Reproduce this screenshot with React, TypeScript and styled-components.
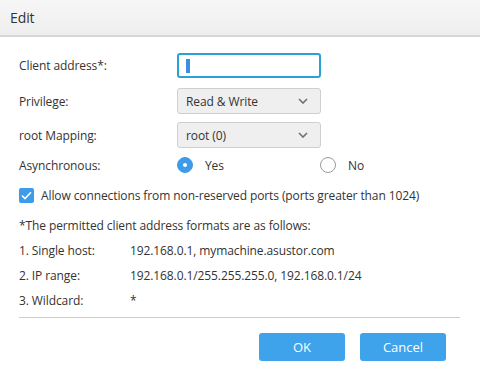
import styled, { createGlobalStyle } from 'styled-components';

const GlobalStyle = createGlobalStyle`
  html, body {
    margin: 0;
    padding: 0;
    background: #ffffff;
  }
  body {
    font-family: 'Open Sans', 'Noto Sans', 'Liberation Sans', sans-serif;
    font-size: 12px;
    letter-spacing: -0.1px;
    color: #333333;
  }
`;

const Dialog = styled.div`
  width: 480px;
  height: 373px;
  display: flex;
  flex-direction: column;
  background: #ffffff;
  overflow: hidden;
`;

const TitleBar = styled.div`
  height: 35px;
  display: flex;
  align-items: center;
  padding-left: 10px;
  background: linear-gradient(#f6f6f6, #eeeeee);
  border-bottom: 2px solid #d6d6d6;
  font-size: 14px;
  color: #333333;
`;

const Body = styled.div`
  padding: 16px 20px 0 19px;
  display: flex;
  flex-direction: column;
`;

const FieldRow = styled.div<{ $h: number; $mb: number }>`
  display: grid;
  grid-template-columns: 158px 1fr;
  align-items: center;
  height: ${(p) => p.$h}px;
  margin-bottom: ${(p) => p.$mb}px;
`;

const Label = styled.div`
  color: #333333;
`;

const TextInput = styled.div`
  width: 144px;
  height: 25px;
  box-sizing: border-box;
  border: 2px solid #2aa0d4;
  border-radius: 3px;
  display: flex;
  align-items: center;
  padding-left: 7px;
`;

const Selection = styled.span`
  display: inline-block;
  width: 4px;
  height: 14px;
  background: #3a8fe3;
`;

const Select = styled.div`
  width: 144px;
  height: 26px;
  box-sizing: border-box;
  border: 1px solid #cfcfcf;
  border-radius: 3px;
  background: #efefef;
  display: flex;
  align-items: center;
  justify-content: space-between;
  padding: 0 12px 0 8px;
  color: #333333;
`;

const RadioGroup = styled.div`
  display: flex;
  align-items: center;
`;

const RadioOption = styled.div<{ $w?: number }>`
  display: flex;
  align-items: center;
  gap: 12px;
  width: ${(p) => (p.$w ? `${p.$w}px` : 'auto')};
`;

const RadioCircle = styled.span<{ $on?: boolean }>`
  width: 16px;
  height: 16px;
  box-sizing: border-box;
  border-radius: 50%;
  border: 1px solid ${(p) => (p.$on ? '#3d9be9' : '#9a9a9a')};
  background: ${(p) => (p.$on ? '#3d9be9' : '#ffffff')};
  display: flex;
  align-items: center;
  justify-content: center;
  &::after {
    content: '';
    width: 4px;
    height: 4px;
    border-radius: 50%;
    background: #ffffff;
    display: ${(p) => (p.$on ? 'block' : 'none')};
  }
`;

const CheckRow = styled.div`
  display: flex;
  align-items: center;
  gap: 7px;
  margin-top: 12px;
  height: 16px;
`;

const CheckBox = styled.span`
  width: 15px;
  height: 15px;
  border-radius: 2px;
  background: #3d9be9;
  display: flex;
  align-items: center;
  justify-content: center;
`;

const Note = styled.div`
  margin-top: 13px;
  margin-bottom: 2px;
  height: 20px;
  line-height: 20px;
`;

const FormatRow = styled.div`
  display: grid;
  grid-template-columns: 111px 1fr;
  height: 25px;
  line-height: 25px;
`;

const Divider = styled.div`
  margin-top: 4px;
  height: 1px;
  width: 441px;
  background: #cccccc;
`;

const Footer = styled.div`
  display: flex;
  justify-content: flex-end;
  gap: 15px;
  padding: 15px 34px 0 0;
`;

const Button = styled.button`
  width: 86px;
  height: 28px;
  border: none;
  border-radius: 3px;
  background: #3ea3eb;
  color: #ffffff;
  font-family: inherit;
  font-size: 13px;
  padding: 0;
  cursor: pointer;
`;

const Chevron = () => (
  <svg width="10" height="6" viewBox="0 0 10 6">
    <path d="M1 1 L5 5 L9 1" fill="none" stroke="#6f6f6f" strokeWidth="1.6" />
  </svg>
);

const Check = () => (
  <svg width="11" height="9" viewBox="0 0 11 9">
    <path d="M1 4.5 L4 7.5 L10 1.2" fill="none" stroke="#ffffff" strokeWidth="1.6" />
  </svg>
);

const formats = [
  { label: '1. Single host:', value: '192.168.0.1, mymachine.asustor.com' },
  { label: '2. IP range:', value: '192.168.0.1/255.255.255.0, 192.168.0.1/24' },
  { label: '3. Wildcard:', value: '*' },
];

export default function App() {
  return (
    <>
      <GlobalStyle />
      <Dialog>
        <TitleBar>Edit</TitleBar>
        <Body>
          <FieldRow $h={25} $mb={10}>
            <Label>Client address*:</Label>
            <TextInput>
              <Selection />
            </TextInput>
          </FieldRow>
          <FieldRow $h={26} $mb={8}>
            <Label>Privilege:</Label>
            <Select>
              <span>Read &amp; Write</span>
              <Chevron />
            </Select>
          </FieldRow>
          <FieldRow $h={26} $mb={7}>
            <Label>root Mapping:</Label>
            <Select>
              <span>root (0)</span>
              <Chevron />
            </Select>
          </FieldRow>
          <FieldRow $h={20} $mb={0}>
            <Label>Asynchronous:</Label>
            <RadioGroup>
              <RadioOption $w={143}>
                <RadioCircle $on />
                <span>Yes</span>
              </RadioOption>
              <RadioOption>
                <RadioCircle />
                <span>No</span>
              </RadioOption>
            </RadioGroup>
          </FieldRow>
          <CheckRow>
            <CheckBox>
              <Check />
            </CheckBox>
            <span>Allow connections from non-reserved ports (ports greater than 1024)</span>
          </CheckRow>
          <Note>*The permitted client address formats are as follows:</Note>
          {formats.map((f) => (
            <FormatRow key={f.label}>
              <span>{f.label}</span>
              <span>{f.value}</span>
            </FormatRow>
          ))}
          <Divider />
        </Body>
        <Footer>
          <Button>OK</Button>
          <Button>Cancel</Button>
        </Footer>
      </Dialog>
    </>
  );
}
